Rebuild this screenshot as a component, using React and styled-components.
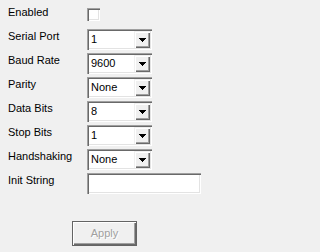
import React from "react";
import styled, { createGlobalStyle } from "styled-components";

const Global = createGlobalStyle`
  html, body { margin: 0; padding: 0; background: #f0f0f0; }
  body { font-family: "Liberation Sans", Arial, sans-serif; font-size: 11px; color: #000; }
`;

const Page = styled.div`
  width: 208px;
  height: 252px;
  background: #f0f0f0;
  padding-top: 5px;
  box-sizing: border-box;
`;

const Form = styled.div`
  display: flex;
  flex-direction: column;
  gap: 3px;
  padding-left: 8px;
`;

const Row = styled.div`
  display: flex;
  align-items: flex-start;
  height: 21px;
`;

const Label = styled.div`
  width: 79px;
  line-height: 13px;
  padding-top: 1px;
  font-size: 11px;
`;

const sunken = `
  box-shadow: inset 1px 1px #a0a0a0, inset 2px 2px #696969, inset -1px -1px #ffffff, inset -2px -2px #e3e3e3;
`;

const Check = styled.div`
  margin-top: 3px;
  width: 13px;
  height: 13px;
  background: #fff;
  ${sunken}
`;

const Combo = styled.div`
  position: relative;
  width: 65px;
  height: 21px;
  background: #fff;
  ${sunken}
  box-sizing: border-box;
  padding: 2px;
  display: flex;
`;

const ComboText = styled.div`
  flex: 1;
  padding-left: 2px;
  line-height: 17px;
  font-size: 11px;
`;

const DropBtn = styled.div`
  width: 16px;
  height: 17px;
  background: #f0f0f0;
  box-sizing: border-box;
  box-shadow: inset 1px 1px #f0f0f0, inset 2px 2px #ffffff, inset -1px -1px #696969, inset -2px -2px #a0a0a0;
  display: flex;
  align-items: center;
  justify-content: center;
  padding-top: 1px;
`;

const TextBox = styled.div`
  width: 114px;
  height: 21px;
  background: #fff;
  ${sunken}
`;

const Footer = styled.div`
  display: flex;
  justify-content: center;
  margin-top: 27px;
  padding-left: 1px;
`;

const Button = styled.div`
  width: 65px;
  height: 25px;
  box-sizing: border-box;
  border: 1px solid #646464;
  background: #f0f0f0;
  box-shadow: inset 1px 1px #ffffff, inset -1px -1px #696969, inset -2px -2px #a0a0a0;
  display: flex;
  align-items: center;
  justify-content: center;
  color: #a0a0a0;
  text-shadow: 1px 1px 0 #ffffff;
  font-size: 11px;
  padding-bottom: 1px;
`;

const Arrow = () => (
  <svg width="7" height="4" viewBox="0 0 7 4" shapeRendering="crispEdges">
    <path d="M0 0h7v1h-1v1h-1v1h-1v1h-1v-1h-1v-1h-1v-1h-1z" fill="#000" />
  </svg>
);

const ComboBox = ({ value }) => (
  <Combo>
    <ComboText>{value}</ComboText>
    <DropBtn>
      <Arrow />
    </DropBtn>
  </Combo>
);

const fields = [
  ["Serial Port", "1"],
  ["Baud Rate", "9600"],
  ["Parity", "None"],
  ["Data Bits", "8"],
  ["Stop Bits", "1"],
  ["Handshaking", "None"],
];

export default function App() {
  return (
    <Page>
      <Global />
      <Form>
        <Row>
          <Label>Enabled</Label>
          <Check />
        </Row>
        {fields.map(([l, v]) => (
          <Row key={l}>
            <Label>{l}</Label>
            <ComboBox value={v} />
          </Row>
        ))}
        <Row>
          <Label>Init String</Label>
          <TextBox />
        </Row>
      </Form>
      <Footer>
        <Button>Apply</Button>
      </Footer>
    </Page>
  );
}
